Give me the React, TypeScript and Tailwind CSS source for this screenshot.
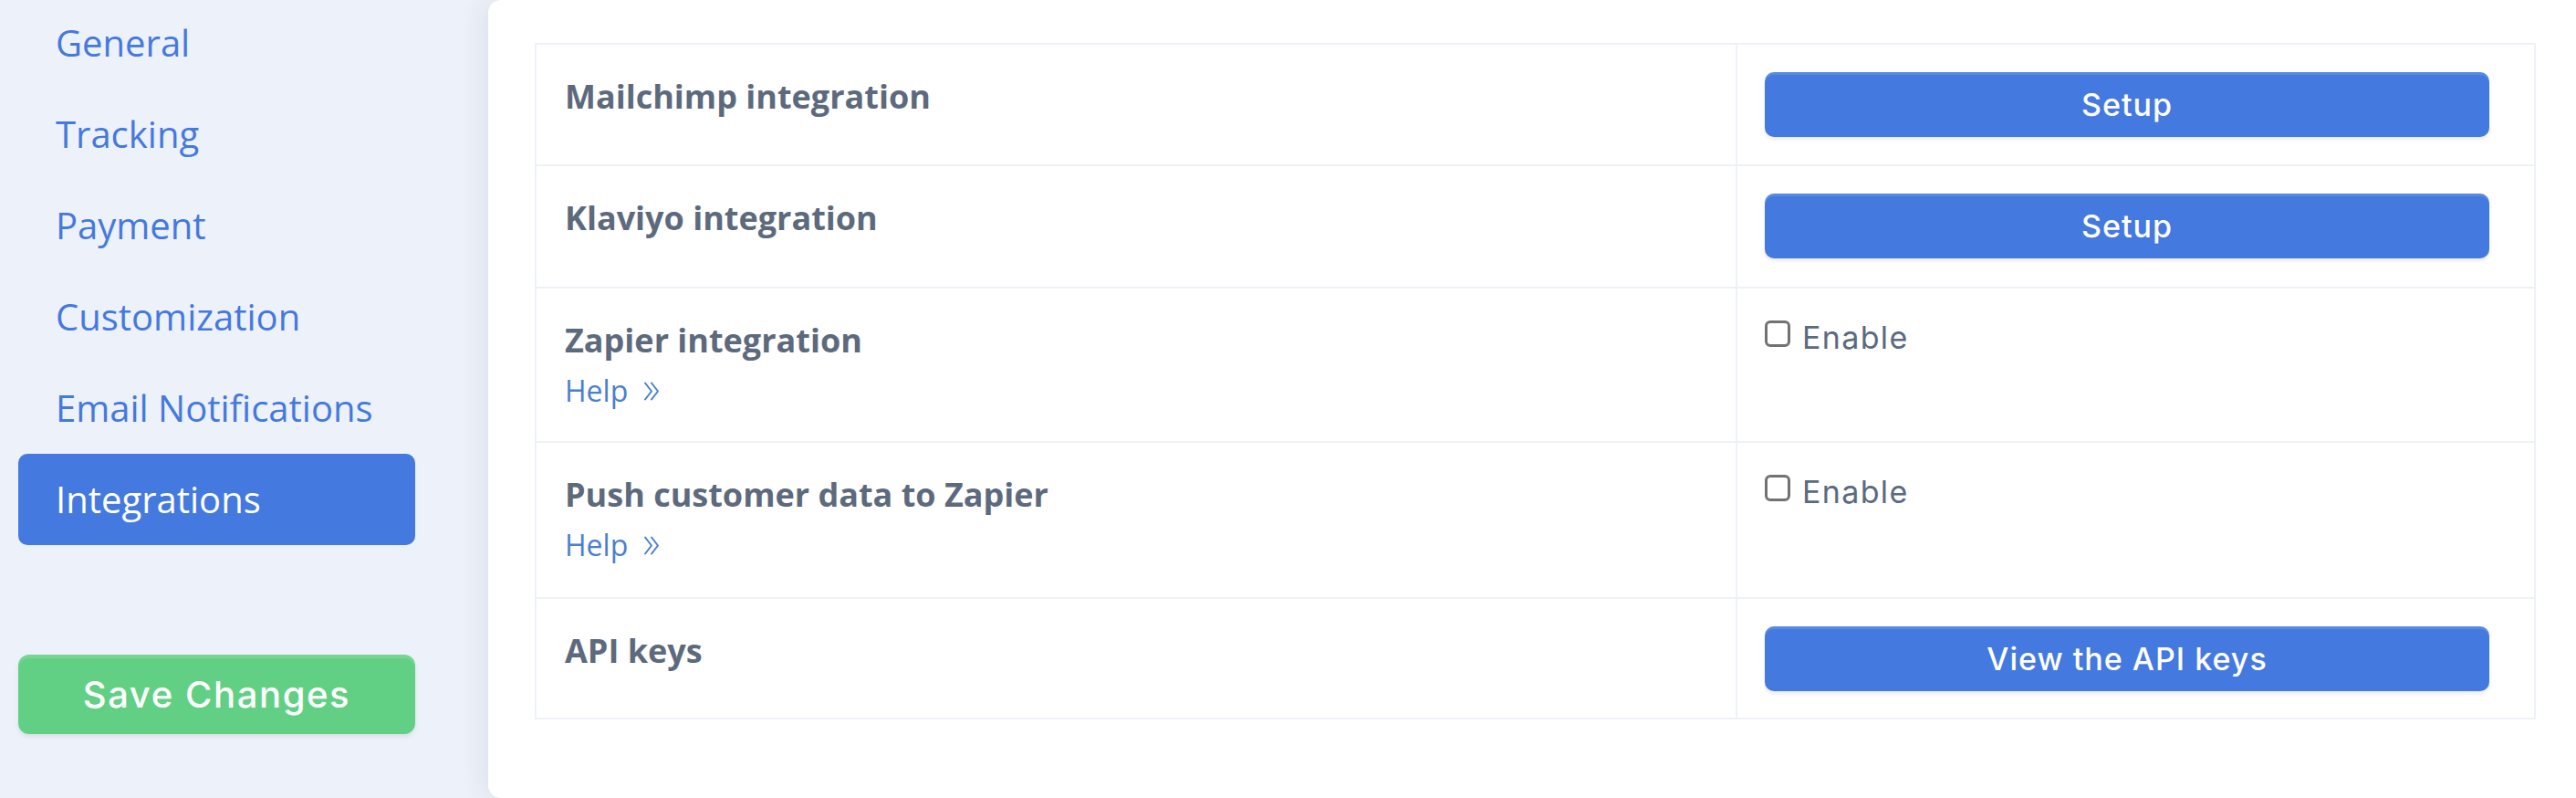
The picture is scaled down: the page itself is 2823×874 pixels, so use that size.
import { ReactNode } from "react";

const navItems = ["General", "Tracking", "Payment", "Customization", "Email Notifications", "Integrations"];

function ChevronsIcon() {
  return (
    <svg width="18" height="21" viewBox="0 0 18 21" fill="none" stroke="currentColor" strokeWidth="2" strokeLinecap="round" strokeLinejoin="round">
      <path d="M2 1.5 L9 10.5 L2 19.5" />
      <path d="M9 1.5 L16 10.5 L9 19.5" />
    </svg>
  );
}

function HelpLink() {
  return (
    <a className="mt-[4px] flex h-[48px] items-center gap-[17px] text-[32px] leading-[48px] text-[#4a7fd0]">
      <span>Help</span>
      <ChevronsIcon />
    </a>
  );
}

function BlueButton({ label }: { label: string }) {
  return (
    <button className="flex h-[71px] w-[794px] items-center justify-center rounded-[10px] bg-[#4479df] font-['Inter',sans-serif] text-[34px] font-medium tracking-[0.03em] text-white shadow-[inset_0_3px_0_rgba(255,255,255,0.12),0_3px_4px_rgba(0,0,0,0.08)]">
      {label}
    </button>
  );
}

function EnableCheck() {
  return (
    <label className="flex h-[48px] items-start gap-[13px] font-['Inter',sans-serif] text-[34px] tracking-[0.04em] leading-[48px] text-[#5b6a80]">
      <span className="mt-[5px] block h-[29px] w-[28px] rounded-[6px] border-[3px] border-[#727272] bg-white" />
      <span>Enable</span>
    </label>
  );
}

function Row({ height, first, left, right }: { height: string; first?: boolean; left: ReactNode; right: ReactNode }) {
  return (
    <div className={`flex ${height} ${first ? "" : "border-t-2 border-[#eef2f8]"}`}>
      <div className="flex w-[1314px] flex-col pl-[31px] pt-[30px]">{left}</div>
      <div className="flex-1 border-l-2 border-[#eef2f8] pl-[30px] pt-[30px]">{right}</div>
    </div>
  );
}

function Title({ children }: { children: ReactNode }) {
  return <div className="h-[54px] text-[36px] font-bold leading-[54px] text-[#5d6a7d]">{children}</div>;
}

export default function App() {
  return (
    <div className="flex h-[874px] w-[2823px] overflow-hidden bg-[#edf1f9] font-['Open_Sans',sans-serif]">
      <aside className="w-[535px] shrink-0 pl-[20px] pr-[80px]">
        <nav className="-mt-[3px] flex flex-col">
          {navItems.map((item) => (
            <a
              key={item}
              className={`flex h-[100px] items-center rounded-[10px] pl-[41px] text-[40px] ${
                item === "Integrations" ? "bg-[#4479df] text-white" : "text-[#4479df]"
              }`}
            >
              {item}
            </a>
          ))}
        </nav>
        <button className="mt-[120px] flex h-[87px] w-full items-center justify-center rounded-[12px] bg-[#62d084] font-['Inter',sans-serif] text-[40px] font-medium tracking-[0.04em] text-white shadow-[inset_0_4px_0_rgba(255,255,255,0.12),0_3px_5px_rgba(0,0,0,0.08)]">
          Save Changes
        </button>
      </aside>

      <main className="flex-1 rounded-l-[14px] bg-white pl-[51px] pr-[44px] pt-[47px] shadow-[-10px_0_22px_rgba(60,80,120,0.07)]">
        <div className="border-2 border-[#eef2f8]">
          <Row first height="h-[131px]" left={<Title>Mailchimp integration</Title>} right={<BlueButton label="Setup" />} />
          <Row height="h-[134px]" left={<Title>Klaviyo integration</Title>} right={<BlueButton label="Setup" />} />
          <Row
            height="h-[169px]"
            left={
              <>
                <Title>Zapier integration</Title>
                <HelpLink />
              </>
            }
            right={<EnableCheck />}
          />
          <Row
            height="h-[171px]"
            left={
              <>
                <Title>Push customer data to Zapier</Title>
                <HelpLink />
              </>
            }
            right={<EnableCheck />}
          />
          <Row height="h-[132px]" left={<Title>API keys</Title>} right={<BlueButton label="View the API keys" />} />
        </div>
      </main>
    </div>
  );
}
